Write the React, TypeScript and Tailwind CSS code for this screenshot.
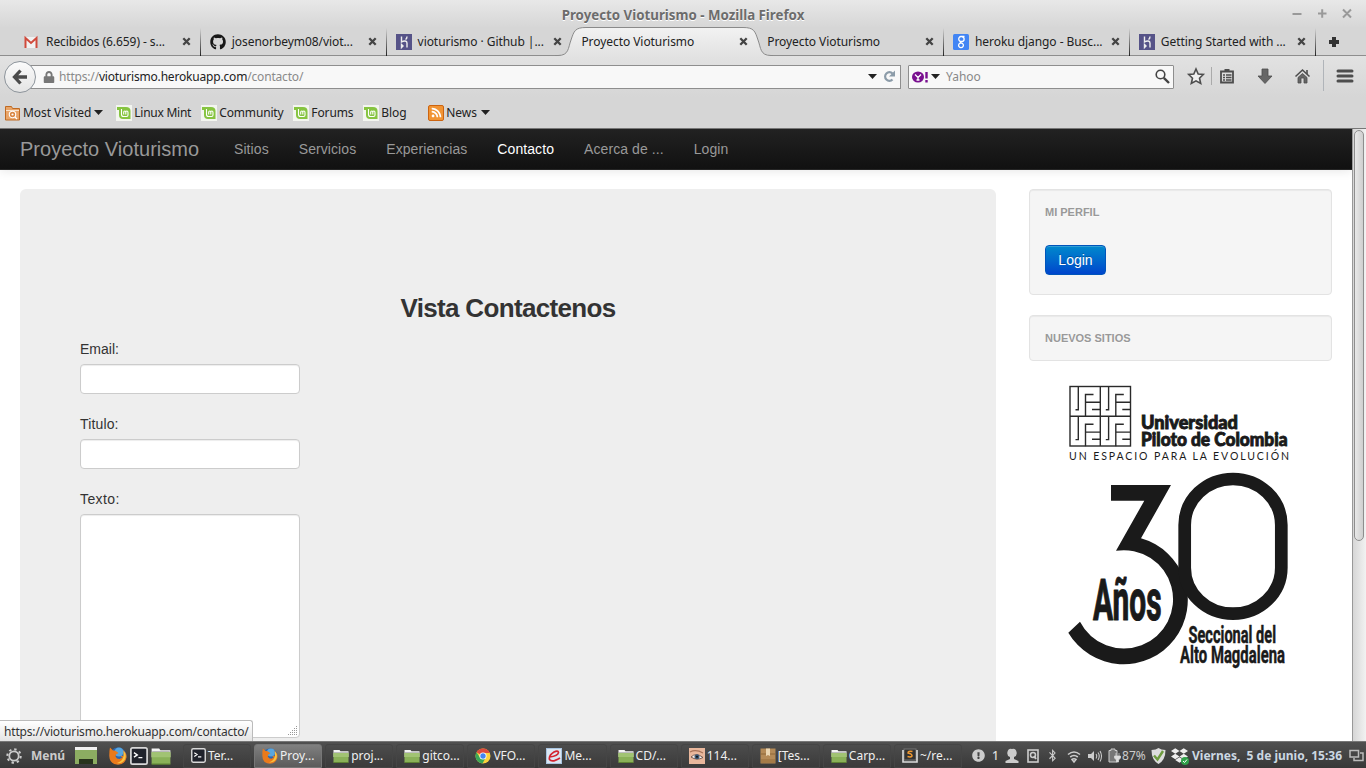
import type { ReactNode } from "react";
import { FaBluetoothB, FaDropbox, FaExclamationCircle, FaGithub, FaLock, FaRss } from "react-icons/fa";

const Caret = () => (
  <svg width="9" height="5" viewBox="0 0 9 5" className="shrink-0"><path d="M0 0H9L4.5 5Z" fill="#222" /></svg>
);

const CloseX = ({ color = "#444" }: { color?: string }) => (
  <svg width="9" height="9" viewBox="0 0 9 9" className="shrink-0"><path d="M1.3 1.3L7.7 7.7M7.7 1.3L1.3 7.7" stroke={color} strokeWidth="2.3" /></svg>
);

const Gmail = () => (
  <svg width="16" height="16" viewBox="0 0 16 16"><path d="M1 3H13V14H1Z" fill="#f1f1f1" /><path d="M1.500 14V4L7 9L12.500 4V14" fill="none" stroke="#d04a3c" strokeWidth="2" /></svg>
);

const Heroku = () => (
  <svg width="16" height="16" viewBox="0 0 16 16"><rect width="16" height="16" fill="#565388" /><path d="M5.5 2.5V8C8 6.5 11 6.5 11 9V13.5M11 2.5Q11 4.500 9.500 5.500M5.500 10.500V13.500L7 12Z" fill="none" stroke="#eee" strokeWidth="1.4" /></svg>
);

const Google = () => (
  <svg width="16" height="16" viewBox="0 0 16 16"><rect width="16" height="16" rx="1.500" fill="#4285f4" /><path d="M11.500 2.500H8A2.500 2.500 0 1 0 8.500 7.500A2.300 2.300 0 0 0 9 2.800M7.500 7.500Q6.500 8.500 8.500 9.200A2.400 2.200 0 1 1 7.500 9.200" fill="none" stroke="#fff" strokeWidth="1.300" /></svg>
);

const Mint = () => (
  <svg width="16" height="16" viewBox="0 0 16 16" className="shrink-0"><rect width="16" height="16" fill="#f3f5ef" /><path d="M1 2H10Q14.500 2 14.500 6V14H7Q3 14 3 10V5H1Z" fill="#86c440" /><path d="M5.500 4V9.500Q5.500 11.500 7.500 11.500H10.500Q12 11.500 12 10V7.500Q12 6 10.800 6Q9.800 6 9.800 7.200V9.500M9.800 7.200Q9.800 6 8.800 6Q7.700 6 7.700 7.200V9.500" fill="none" stroke="#fff" strokeWidth="1.100" /></svg>
);

const FolderStar = () => (
  <svg width="16" height="16" viewBox="0 0 16 16" className="shrink-0"><path d="M.5 1.500H6.500L7.500 3.500H14.500V15H.5Z" fill="#e9a569" stroke="#bf6a22" /><path d="M1 5.500H14" stroke="#fbe3cb" /><circle cx="7.500" cy="9.500" r="3.200" fill="#d98742" stroke="#fff" strokeWidth="1.100" /><circle cx="7.500" cy="9.500" r="1.100" fill="#fff" /><path d="M10 12L12 14" stroke="#fff" strokeWidth="1.300" /></svg>
);

const Folder = ({ size = 16 }: { size?: number }) => (
  <svg width={size} height={size} viewBox="0 0 16 16" className="shrink-0"><path d="M.5 2H6.500L7.500 3.300H15.500V9H.5Z" fill="#f3f3f3" /><path d="M1 4.500H15" stroke="#999" strokeWidth=".6" /><rect x=".5" y="5" width="15" height="9.500" fill="#8ab158" /><rect x=".5" y="5" width="15" height="4" fill="#a1c373" /><path d="M.5 14.500H15.500" stroke="#5f8434" /></svg>
);

const Term = ({ size = 15 }: { size?: number }) => (
  <svg width={size} height={size} viewBox="0 0 16 16" className="shrink-0"><rect x=".8" y=".8" width="14.400" height="14.400" rx="1.500" fill="#20232c" stroke="#d8d8d8" strokeWidth="1.500" /><path d="M3.500 5L6.500 7L3.500 9M7.500 9.500H11" fill="none" stroke="#fff" strokeWidth="1.200" /></svg>
);

const Firefox = ({ size = 16 }: { size?: number }) => (
  <svg width={size} height={size} viewBox="0 0 18 18" className="shrink-0"><circle cx="9" cy="9" r="8.500" fill="#2b66b1" /><circle cx="10" cy="5" r="4.500" fill="#58a6df" /><path d="M1 .5L4 3.500Q6 3 7.500 4.500L9.500 6L7 7.500L6.500 9.500Q7.500 12 10.500 12L13.500 10.500L11.500 9.500Q13.500 8 14.500 9.500Q15.500 6 14 3Q18 6 17.500 10.500Q16 17.500 9 17.800Q.5 17 .3 9Q.2 4 1 .5Z" fill="#ea7a1c" /><path d="M14.500 3.500Q18 8 16 12.500Q13 17 8 16Q13 14.500 14.500 9.500Z" fill="#f8c441" /></svg>
);

const Chrome = () => (
  <svg width="16" height="16" viewBox="0 0 16 16" className="shrink-0"><circle cx="8" cy="8" r="7.500" fill="#fbd13d" /><path d="M8 8L1.500 4.250A7.500 7.500 0 0 1 14.800 5H8Z" fill="#dd4b3e" /><path d="M1.500 4.250A7.500 7.500 0 0 0 7.500 15.500L10.500 10L5 9.500Z" fill="#3aa757" /><circle cx="8" cy="8" r="3.500" fill="#fff" /><circle cx="8" cy="8" r="2.700" fill="#4285f4" /></svg>
);

const Reader = () => (
  <svg width="16" height="16" viewBox="0 0 16 16" className="shrink-0"><rect width="16" height="16" fill="#a9c4e0" /><rect x="1" y="1" width="14" height="14" fill="#dbe7f3" /><path d="M3.500 9Q12 8 12.500 4.500Q12 2 8 4Q2.500 7.500 3.500 11.500Q6 15 14 10" fill="none" stroke="#d42431" strokeWidth="1.700" /></svg>
);

const Eye = () => (
  <svg width="16" height="16" viewBox="0 0 16 16" className="shrink-0"><rect width="16" height="16" fill="#e9b79c" /><path d="M1 4Q7 1 14 5" fill="none" stroke="#a87257" strokeWidth="1.300" /><path d="M2 9Q7 4 14 9.500Q8 13 2 9Z" fill="#f8f2ee" stroke="#5b4038" strokeWidth=".8" /><circle cx="8" cy="8.700" r="2.500" fill="#3d5873" /><circle cx="8" cy="8.700" r="1" fill="#111" /></svg>
);

const Box = () => (
  <svg width="16" height="16" viewBox="0 0 16 16" className="shrink-0"><rect x=".5" y=".5" width="15" height="15" fill="#b48a57" /><path d="M.5 6H15.500" stroke="#8d6638" /><path d="M6 .5H10V8L8 7L6 8Z" fill="#ead5b2" /><rect x="1" y="11" width="14" height="4" fill="#a57b48" /></svg>
);

const Sublime = () => (
  <svg width="16" height="16" viewBox="0 0 16 16" className="shrink-0"><rect x="2" y="1" width="12" height="11" fill="#333" stroke="#777" /><path d="M1 2V14H15V2" fill="none" stroke="#ddd" strokeWidth="1.600" /><path d="M10.500 3.500Q6 2.500 6 5Q10.500 6 10 8Q9 9.500 5.500 8.500" fill="none" stroke="#ef9831" strokeWidth="1.500" /></svg>
);

type TabData = { icon?: ReactNode; title: string; active?: boolean; sep?: boolean };
const tabs: TabData[] = [
  { icon: <Gmail />, title: "Recibidos (6.659) - s...", sep: true },
  { icon: <FaGithub size={16} color="#181818" />, title: "josenorbeym08/viot...", sep: true },
  { icon: <Heroku />, title: "vioturismo · Github |..." },
  { title: "Proyecto Vioturismo", active: true },
  { title: "Proyecto Vioturismo", sep: true },
  { icon: <Google />, title: "heroku django - Busc...", sep: true },
  { icon: <Heroku />, title: "Getting Started with ...", sep: true },
];

const Tab = ({ icon, title, active, sep }: TabData) => (
  <div className="relative flex h-[28px] w-[185.800px] shrink-0 items-center pr-[9px] pl-[10px]">
    {active && (
      <svg className="absolute top-[-1px] left-[-16px]" width="218" height="30" viewBox="555 27 218 30">
        <defs><linearGradient id="tab" x2="0" y2="1"><stop stopColor="#f2f2f2" /><stop offset="1" stopColor="#e2e2e2" /></linearGradient></defs>
        <path d="M557 55.500C569 55.500 568 48 571 40C574 31 575 27.500 586 27.500H743C754 27.500 755 31 758 40C761 48 760 55.500 772 55.500V57H557Z" fill="url(#tab)" />
        <path d="M555 55.500H558C569 55.500 568 48 571 40C574 31 575 27.500 586 27.500H743C754 27.500 755 31 758 40C761 48 760 55.500 771 55.500H773" fill="none" stroke="#8a8a8a" />
      </svg>
    )}
    {icon && <span className="mr-[6px] w-4 shrink-0">{icon}</span>}
    <span className="relative flex-1 tracking-[-0.060px] whitespace-nowrap">{title}</span>
    <span className={sep ? "relative translate-x-px" : "relative"}><CloseX /></span>
    {sep && <span className="h-7 w-px translate-x-[10px] bg-linear-to-b from-transparent to-[#222]" />}
  </div>
);

const tasks: [ReactNode, string, boolean?][] = [
  [<Term />, "Ter..."], [<Firefox />, "Proy...", true], [<Folder />, "proj..."], [<Folder />, "gitco..."],
  [<Chrome />, "VFO..."], [<Reader />, "Me..."], [<Folder />, "CD/..."], [<Eye />, "114..."],
  [<Box />, "[Tes..."], [<Folder />, "Carp..."], [<Sublime />, "~/re..."],
];

const Mark = ({ x, y }: { x: number; y: number }) => (
  <g transform={`translate(${x} ${y})`}>
    <path d="M8.300 0V23.300H5.500M15.500 30V8H23.500M15.500 15.800H30M22 23H30" />
  </g>
);

const UniversityLogo = () => (
  <svg width="240" height="300" viewBox="1060.500 376 240 300" className="mx-auto block -translate-x-[0.500px]">
    <g fill="none" stroke="#2a2a2a" strokeWidth="1.400">
      <rect x="1070" y="386.500" width="60.500" height="59.500" />
      <path d="M1100.300 386V446M1070 416.300H1130" />
      <Mark x={1070} y={386.500} /><Mark x={1100.300} y={386.500} /><Mark x={1070} y={416.300} /><Mark x={1100.300} y={416.300} />
    </g>
    <g fill="#1a1a1a">
      <g fontFamily="Lato, 'Open Sans', sans-serif" fontWeight="900" fontSize="18" stroke="#1a1a1a" strokeWidth=".9">
        <text x="1141" y="429" textLength="97" lengthAdjust="spacingAndGlyphs">Universidad</text>
        <text x="1141" y="446" textLength="146.500" lengthAdjust="spacingAndGlyphs">Piloto de Colombia</text>
      </g>
      <text x="1069" y="460" fontFamily="Lato, sans-serif" fontSize="10.500" textLength="220">UN ESPACIO PARA LA EVOLUCIÓN</text>
      <path d="M1111 485H1171L1141 538.300A64.200 64.200 0 1 1 1068.300 632.700L1080 621.700A49.200 49.200 0 1 0 1116 550.800L1144.300 500.700H1111Z" />
      <rect x="1184.700" y="479" width="96.600" height="134.700" rx="48.300" ry="46" fill="none" stroke="#1a1a1a" strokeWidth="12.700" />
      <g fontFamily="Roboto, 'Liberation Sans', sans-serif" fontWeight="700" stroke="#1a1a1a" strokeLinejoin="round">
        <text transform="translate(1093 619.500) scale(.54 1)" fontSize="57" strokeWidth="1.200" textLength="127" lengthAdjust="spacingAndGlyphs">Años</text>
        <text transform="translate(1188.500 643) scale(.5 1)" fontSize="24" strokeWidth=".5" textLength="175" lengthAdjust="spacingAndGlyphs">Seccional del</text>
        <text transform="translate(1180 663) scale(.5 1)" fontSize="24" strokeWidth=".5" textLength="210" lengthAdjust="spacingAndGlyphs">Alto Magdalena</text>
      </g>
    </g>
  </svg>
);

const nav = ["Sitios", "Servicios", "Experiencias", "Contacto", "Acerca de ...", "Login"];
const input = "block w-[220px] rounded-[4px] border border-[#ccc] bg-white shadow-[inset_0_1px_1px_rgba(0,0,0,0.075)]";
const well = "rounded-[4px] border border-[#e3e3e3] bg-[#f5f5f5] px-[15px] shadow-[inset_0_1px_1px_rgba(0,0,0,0.05)]";

export default function App() {
  return (
    <div className="flex h-[768px] w-[1366px] flex-col overflow-hidden bg-[#d6d6d6] font-['Noto_Sans',sans-serif] text-[12px] text-[#222]">
      <header className="flex h-[129px] shrink-0 flex-col border-b border-[#777]">
        <div className="flex h-7 shrink-0 items-center bg-linear-to-b from-[#e8e8e8] to-[#d6d6d6] pl-[132px]">
          <h1 className="flex-1 pt-[3px] text-center text-[13.300px] font-bold text-[#6c6c6c] [text-shadow:0_1px_0_#fff]">Proyecto Vioturismo - Mozilla Firefox</h1>
          <svg width="132" height="28" viewBox="1234 0 132 28" fill="none" stroke="#999" strokeWidth="2"><path d="M1292.500 14H1301.500M1318 13.500H1326.500M1322.200 9.300V17.700M1343 9.500L1351 17.500M1351 9.500L1343 17.500" /></svg>
        </div>
        <div className="flex h-7 shrink-0 items-center border-b border-[#8e8e8e] pl-[14px]">
          {tabs.map((t, i) => <Tab key={i} {...t} />)}
          <svg width="10" height="10" viewBox="0 0 10 10" className="ml-[14px]"><path d="M5 0V10M0 5H10" stroke="#333" strokeWidth="4" /></svg>
        </div>
        <div className="flex h-[41px] shrink-0 items-center bg-linear-to-b from-[#e2e2e2] to-[#d6d6d6]">
          <div className="relative z-10 ml-[4px] flex size-[32px] shrink-0 items-center justify-center rounded-full border border-[#8d949b] bg-linear-to-b from-[#fbfbfb] to-[#e4e4e4]">
            <svg width="16" height="16" viewBox="0 0 16 16" fill="none" stroke="#4b4b4b" strokeWidth="3.300"><path d="M8.500 1.500L2.500 8L8.500 14.500M3 8H15" /></svg>
          </div>
          <div className="-ml-2 flex h-6 w-[873px] items-center border border-[#8e8e8e] bg-[#f8f8f8] pr-1 pl-[13.500px] text-[#8a8a8a]">
            <FaLock size={12} color="#777" />
            <span className="ml-[4.500px] flex-1 tracking-[-0.180px]">https://<span className="text-[#222]">vioturismo.herokuapp.com</span>/contacto/</span>
            <Caret />
            <svg width="13" height="13" viewBox="0 0 13 13" className="ml-[6px]"><path d="M9.500 9.500A4.300 4.300 0 1 1 9.500 3.500" fill="none" stroke="#8b9ba8" strokeWidth="2.200" /><path d="M12 .5V6.500H6Z" fill="#8b9ba8" /></svg>
          </div>
          <div className="ml-[7px] flex h-6 w-[266px] items-center rounded-[1px] border border-[#8e8e8e] bg-[#f8f8f8] pr-[3px] pl-[3px]">
            <svg width="17" height="14" viewBox="0 0 17 14"><ellipse cx="6" cy="7" rx="6" ry="5.500" fill="#79108f" /><path d="M3 4.500L6 7.500V10M9 4.500L6 7.500M4.500 10H7.500" stroke="#fff" strokeWidth="1.300" fill="none" /><path d="M14.500 2V8.500M14.500 10V12.500" stroke="#79108f" strokeWidth="2.400" /></svg>
            <span className="ml-[2px]"><Caret /></span>
            <span className="ml-[6px] flex-1 text-[#888]">Yahoo</span>
            <svg width="15" height="15" viewBox="0 0 15 15" fill="none" stroke="#444"><circle cx="5.500" cy="5.500" r="4.300" strokeWidth="1.600" /><path d="M8.800 8.800L14 14" strokeWidth="2.400" /></svg>
          </div>
          <svg width="192" height="41" viewBox="1174 56 192 41" fill="none" stroke="#4d4d4d">
            <path d="M1196 69L1198.200 74L1203.300 74.500L1199.500 78.200L1200.700 83.500L1196 80.800L1191.300 83.500L1192.500 78.200L1188.700 74.500L1193.800 74Z" fill="#f0f0f0" strokeWidth="1.600" />
            <path d="M1211.500 67V85" stroke="#aaa" />
            <path d="M1221 71.500H1233V82.500H1221Z" strokeWidth="1.800" /><path d="M1224.500 70.500H1229.500" strokeWidth="3" /><path d="M1223 75H1225M1226 75H1231.500M1223 77.500H1225M1226 77.500H1231.500M1223 80H1225M1226 80H1231.500" strokeWidth="1.300" />
            <path d="M1262 69H1268V76H1272L1265 83.500L1258 76H1262Z" fill="#666" strokeWidth=".8" />
            <path d="M1295.500 76.500L1302.500 70L1309.500 76.500" strokeWidth="1.600" /><path d="M1307 70V74" strokeWidth="1.600" /><path d="M1298 77.500L1302.500 73.500L1307 77.500V83H1304V78H1301V83H1298Z" fill="#666" strokeWidth=".8" />
            <path d="M1323.500 60V91" stroke="#b0b4b9" />
            <path d="M1338 71H1352M1338 76H1352M1338 81H1352" strokeWidth="3" strokeLinecap="round" />
          </svg>
        </div>
        <nav className="flex h-[31px] items-center pl-[5px] tracking-[-0.060px]">
          <FolderStar /><span className="mr-[3px] ml-[2px]">Most Visited</span><Caret />
          <span className="ml-[13px] flex w-[75px] items-center gap-[2px] tracking-[-0.250px] whitespace-nowrap"><Mint />Linux Mint</span>
          <span className="ml-[10px] flex w-[82px] items-center gap-[2px] tracking-[-0.160px]"><Mint />Community</span>
          <span className="ml-[10px] flex w-[60px] items-center gap-[2px] tracking-[-0.100px]"><Mint />Forums</span>
          <span className="ml-[10px] flex w-[44px] items-center gap-[2px]"><Mint />Blog</span>
          <span className="mr-[2px] ml-[21px] flex size-4 items-center justify-center rounded-[2px] border border-[#cc6410] bg-[#f19434]"><FaRss size={11} color="#fff" /></span>
          <span className="mr-[4px]">News</span><Caret />
        </nav>
      </header>

      <div className="relative flex h-[612px] shrink-0 overflow-hidden bg-white font-['Liberation_Sans',Arial,sans-serif] text-[14px] leading-5 text-[#333]">
        <main className="flex w-[1352px] flex-col">
          <div className="flex h-[41px] shrink-0 items-center border-b border-[#252525] bg-linear-to-b from-[#222] to-[#111] pl-5 text-[#999] shadow-[0_1px_10px_rgba(0,0,0,0.1)]">
            <span className="w-[199px] text-[20px] tracking-[0.030px]">Proyecto Vioturismo</span>
            <div className="flex tracking-[0.080px]">
              {nav.map((n) => <span key={n} className={n === "Contacto" ? "px-[15px] text-white" : "px-[15px]"}>{n}</span>)}
            </div>
          </div>
          <div className="flex pt-[19px] pl-5">
            <section className="h-[552px] w-[976px] rounded-t-[6px] bg-[#eee] px-[60px] pt-[99px]">
              <h2 className="h-[51px] text-center text-[26px] leading-[40px] font-bold tracking-[-0.660px]">Vista Contactenos</h2>
              <label className="mb-[5px] block">Email:</label>
              <input className={`${input} mb-5 h-[30px]`} />
              <label className="mb-[5px] block tracking-[0.150px]">Titulo:</label>
              <input className={`${input} mb-5 h-[30px]`} />
              <label className="mb-[5px] block tracking-[0.400px]">Texto:</label>
              <div className="relative w-[220px]">
                <textarea className={`${input} h-[224px] resize-none`} />
                <svg className="absolute right-[2px] bottom-[2px]" width="10" height="10" viewBox="0 0 10 10"><path d="M8 .5H9M6 2.500H7M8 2.500H9M4 4.500H5M6 4.500H7M8 4.500H9M2 6.500H3M4 6.500H5M6 6.500H7M8 6.500H9M0 8.500H1M2 8.500H3M4 8.500H5M6 8.500H7M8 8.500H9" stroke="#999" /></svg>
              </div>
            </section>
            <aside className="ml-[33px] w-[303px]">
              <div className={`${well} h-[106px] pt-[12px]`}>
                <h3 className="text-[11px] font-bold text-[#999] [text-shadow:0_1px_0_rgba(255,255,255,0.5)]">MI PERFIL</h3>
                <button className="mt-[23px] h-[30px] w-[61px] rounded-[4px] border border-[#0055bb] bg-linear-to-b from-[#0088cc] to-[#0044cc] text-white shadow-[inset_0_1px_0_rgba(255,255,255,0.2)] [text-shadow:0_-1px_0_rgba(0,0,0,0.25)]">Login</button>
              </div>
              <div className={`${well} mt-5 mb-[15px] h-[46px] pt-[12px]`}>
                <h3 className="text-[11px] font-bold text-[#999] [text-shadow:0_1px_0_rgba(255,255,255,0.5)]">NUEVOS SITIOS</h3>
              </div>
              <UniversityLogo />
            </aside>
          </div>
        </main>
        <div className="w-[14px] border-l border-[#999] bg-linear-to-r from-[#d6d6d6] to-[#f2f2f2] pt-px pl-px">
          <div className="h-[411px] w-[10px] rounded-[5px] border border-[#8e8e8e] bg-linear-to-r from-[#e8e8e8] to-[#cfcfcf]" />
        </div>
        <div className="absolute bottom-0 left-0 flex h-[21px] w-[253px] items-center rounded-tr-[3px] border-t border-r border-[#bbb] bg-linear-to-b from-white to-[#e4e4e4] pt-px pl-1 font-['Noto_Sans',sans-serif] text-[12px] tracking-[-0.170px] whitespace-nowrap">https://vioturismo.herokuapp.com/contacto/</div>
      </div>

      <footer className="flex h-[27px] shrink-0 items-center border-t border-[#777] bg-linear-to-b from-[#505050] to-[#383838] pt-px whitespace-nowrap text-[#f0f0f0]">
        <div className="flex w-[183px] items-center pl-[6px]">
          <svg width="16" height="16" viewBox="0 0 16 16" fill="none" stroke="#ccc"><circle cx="8" cy="8" r="4.700" strokeWidth="1.800" /><circle cx="8" cy="8" r="6.700" strokeWidth="2" strokeDasharray="2.400 2.860" /></svg>
          <span className="ml-[9px] w-[44px] font-bold text-[#ccc]">Menú</span>
          <svg width="22" height="18" viewBox="0 0 22 18"><path d="M0 0H22V4H0Z" fill="#f0f0f0" /><path d="M0 3H22V17H0Z" fill="#8cad62" /><path d="M4 12H18V17H4Z" fill="#28331c" /></svg>
          <span className="ml-[12px] flex items-center gap-[3px]"><Firefox size={18} /><Term size={18} /><Folder size={20} /></span>
        </div>
        <div className="flex gap-[3px]">
          {tasks.map(([icon, label, active]) => (
            <div key={label} className={active ? "flex h-[24px] w-[68.100px] items-center rounded-t-[3px] border border-[#777] bg-linear-to-b from-[#808080] to-[#5b5b5b] pl-[7px]" : "flex h-[24px] w-[68.100px] items-center rounded-t-[3px] border border-[#454545] bg-linear-to-b from-[#4c4c4c] to-[#3b3b3b] pl-[7px]"}>
              {icon}<span className="ml-[2px]">{label}</span>
            </div>
          ))}
        </div>
        <div className="ml-[6px] flex flex-1 items-center text-[#ccc]">
          <FaExclamationCircle size={13} className="ml-[4px]" />
          <span className="ml-[7px] w-[13px] font-medium text-[#ddd]">1</span>
          <svg width="84" height="18" viewBox="1005 746 84 18" fill="none" stroke="#ccc">
            <path d="M1012 748A3.500 4 0 0 1 1014 756V758L1018.500 760V762H1005.500V760L1010 758V756A3.500 4 0 0 1 1012 748Z" fill="#ccc" stroke="none" />
            <rect x="1028" y="749" width="10" height="12" strokeWidth="1.600" /><circle cx="1033" cy="754" r="2.500" strokeWidth="1.500" /><path d="M1034 755L1036 758" strokeWidth="2" />
            <g transform="translate(1047 748)"><FaBluetoothB size={13} color="#ccc" stroke="none" x="-1" /></g>
            <path d="M1068 753.500Q1074 748.500 1080 753.500M1070.200 756Q1074 753 1077.800 756M1072 758.500Q1074 757 1076 758.500L1074 761Z" strokeWidth="1.600" />
          </svg>
          <svg width="15" height="14" viewBox="0 0 15 14" fill="none" stroke="#ccc" className="-ml-px"><path d="M0 5H3L6 2V12L3 9H0Z" fill="#ccc" stroke="none" /><path d="M8 5Q9.500 7 8 9.500M10 3.500Q12.500 7 10 11M12 2Q15 7 12 12.500" strokeWidth="1.100" /></svg>
          <svg width="14" height="15" viewBox="0 0 14 15" className="ml-[5px]"><path d="M1 2.500H3V1H7V2.500H9V14H1Z" fill="#777" stroke="#ccc" /><path d="M8 5V8M11 5V8M6.500 8H12.500V10L10.500 12V14H8.500V12L6.500 10Z" fill="#ddd" stroke="#ddd" strokeWidth=".7" /></svg>
          <span className="w-[29px]">87%</span>
          <svg width="15" height="16" viewBox="0 0 15 16"><path d="M.5 2Q5 2 7.500 0Q10 2 14.500 2Q14.500 12 7.500 16Q.5 12 .5 2Z" fill="#ddd" /><path d="M3 7.500L6.500 11.500L12 3" fill="none" stroke="#6e9b3f" strokeWidth="2.400" /></svg>
          <span className="relative ml-[5px]"><FaDropbox size={17} color="#eee" /><svg width="8" height="8" viewBox="0 0 8 8" className="absolute right-[-1px] bottom-[-1px]"><circle cx="4" cy="4" r="4" fill="#31a04a" /><path d="M2 4L3.500 5.500L6 2.500" fill="none" stroke="#fff" /></svg></span>
          <span className="ml-[4px] flex-1 font-bold whitespace-pre text-[#ccd8e2]">Viernes,  5 de junio, 15:36</span>
          <svg width="15" height="13" viewBox="0 0 15 13" fill="none" stroke="#bbb" strokeWidth="1.500" className="mr-[2px]"><path d="M1 1.500H9.500V8H1ZM11 4H14V11.500H5V9" /></svg>
        </div>
      </footer>
    </div>
  );
}
